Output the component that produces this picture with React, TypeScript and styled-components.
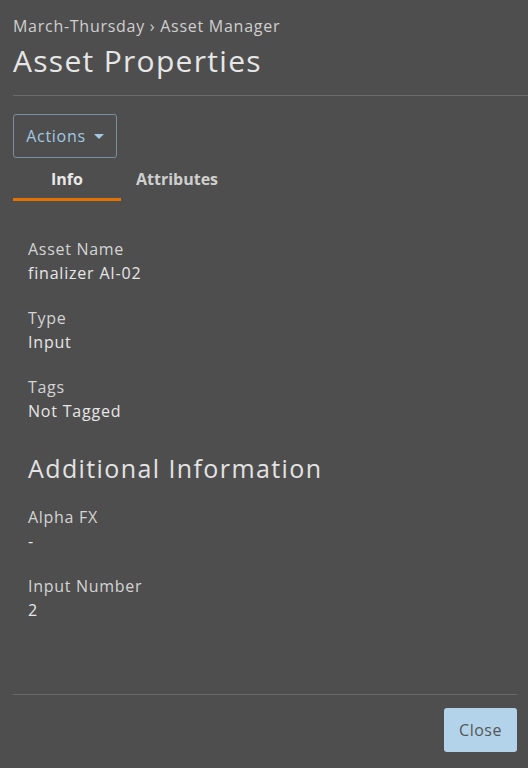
import React from "react";
import styled, { createGlobalStyle } from "styled-components";

const Global = createGlobalStyle`
  html, body { margin: 0; padding: 0; background: #4e4e4e; }
  body { font-family: "Open Sans", "Noto Sans", sans-serif; color: #e3e3e3; }
  * { box-sizing: border-box; }
`;

const Page = styled.div`
  width: 528px;
  height: 768px;
  background: #4e4e4e;
  display: flex;
  flex-direction: column;
  padding-left: 13px;
`;

const Header = styled.header`
  padding-top: 14px;
  border-bottom: 1px solid #6a6a6a;
  padding-bottom: 14px;
`;

const Crumbs = styled.div`
  font-size: 16px;
  line-height: 24px;
  color: #cfcfcf;
  letter-spacing: 0.73px;
`;

const Title = styled.h1`
  margin: 3px 0 0;
  font-size: 30px;
  line-height: 40px;
  font-weight: 400;
  color: #e6e6e6;
  letter-spacing: 1.3px;
`;

const Body = styled.div`
  flex: 1;
  display: flex;
  flex-direction: column;
  padding-right: 11px;
`;

const ActionsButton = styled.button`
  margin-top: 18px;
  align-self: flex-start;
  height: 44px;
  width: 104px;
  border: 1px solid #7b8f9b;
  border-radius: 3px;
  background: transparent;
  color: #a3c8e2;
  font-family: inherit;
  font-size: 16px;
  letter-spacing: 0.7px;
  display: flex;
  align-items: center;
  justify-content: center;
  gap: 8px;
  padding: 0;
`;

const Caret = styled.span`
  width: 0;
  height: 0;
  border-left: 5px solid transparent;
  border-right: 5px solid transparent;
  border-top: 5px solid #a3c8e2;
`;

const Tabs = styled.div`
  display: flex;
`;

const Tab = styled.div<{ $active?: boolean }>`
  height: 43px;
  padding: 2px 15px 0;
  min-width: ${(p) => (p.$active ? "108px" : "auto")};
  display: flex;
  align-items: center;
  justify-content: center;
  font-size: 16px;
  font-weight: 700;
  color: ${(p) => (p.$active ? "#e8e8e8" : "#cfcfcf")};
  border-bottom: 3px solid ${(p) => (p.$active ? "#e57200" : "transparent")};
`;

const Content = styled.div`
  padding: 36px 15px 0;
  display: flex;
  flex-direction: column;
  gap: 21px;
  flex: 1;
`;

const Field = styled.div`
  display: flex;
  flex-direction: column;
`;

const Label = styled.div`
  font-size: 16px;
  line-height: 24px;
  color: #d4d4d4;
  letter-spacing: 0.7px;
`;

const Value = styled.div`
  font-size: 16px;
  line-height: 24px;
  color: #e6e6e6;
  letter-spacing: 0.8px;
`;

const Section = styled.h2`
  margin: 8px 0 0;
  font-size: 25px;
  line-height: 32px;
  font-weight: 400;
  color: #e3e3e3;
  letter-spacing: 1.4px;
`;

const Footer = styled.footer`
  border-top: 1px solid #6a6a6a;
  padding: 13px 0 16px;
  display: flex;
  justify-content: flex-end;
`;

const CloseButton = styled.button`
  width: 73px;
  height: 44px;
  background: #b3d3ea;
  border: none;
  border-radius: 3px;
  color: #565656;
  font-family: inherit;
  font-size: 16px;
  letter-spacing: 0.5px;
  padding: 0;
`;

const fields1 = [
  ["Asset Name", "finalizer AI-02"],
  ["Type", "Input"],
  ["Tags", "Not Tagged"],
];
const fields2 = [
  ["Alpha FX", "-"],
  ["Input Number", "2"],
];

export default function App() {
  return (
    <>
      <Global />
      <Page>
        <Header>
          <Crumbs>March-Thursday › Asset Manager</Crumbs>
          <Title>Asset Properties</Title>
        </Header>
        <Body>
          <ActionsButton>
            Actions <Caret />
          </ActionsButton>
          <Tabs>
            <Tab $active>Info</Tab>
            <Tab>Attributes</Tab>
          </Tabs>
          <Content>
            {fields1.map(([l, v]) => (
              <Field key={l}>
                <Label>{l}</Label>
                <Value>{v}</Value>
              </Field>
            ))}
            <Section>Additional Information</Section>
            {fields2.map(([l, v]) => (
              <Field key={l}>
                <Label>{l}</Label>
                <Value>{v}</Value>
              </Field>
            ))}
          </Content>
          <Footer>
            <CloseButton>Close</CloseButton>
          </Footer>
        </Body>
      </Page>
    </>
  );
}
